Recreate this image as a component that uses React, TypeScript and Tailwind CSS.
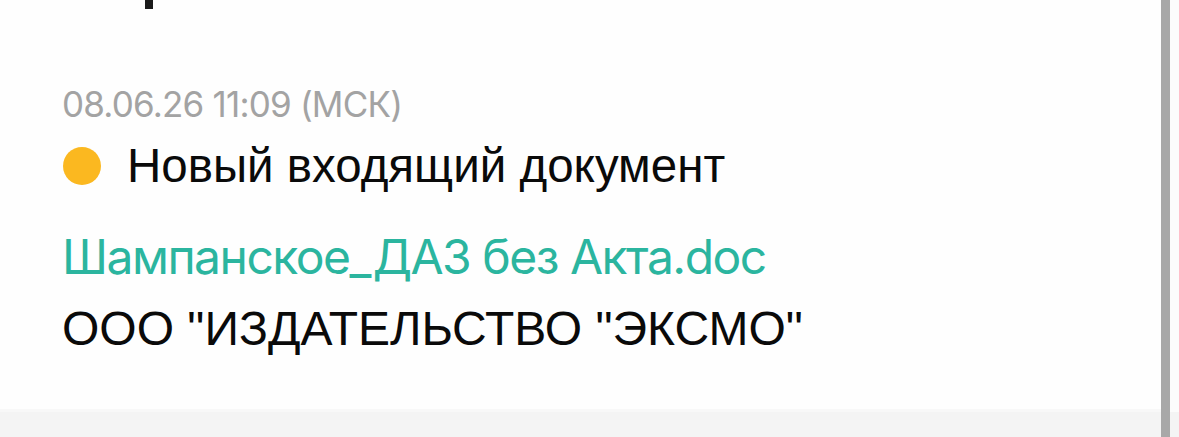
export default function App() {
  return (
    <div className="w-[1179px] h-[437px] bg-[#fefefe] flex overflow-hidden">
      <div className="flex-1 flex flex-col">
        <div className="flex-1 flex flex-col relative">
          <div className="absolute left-[145px] top-0 w-[8px] h-[9px] bg-[#1a1a1a]" />
          <div className="pl-[62px] pt-[84px] flex flex-col">
            <div className="text-[35px] leading-[40px] text-[#a3a3a3] tracking-[-0.8px]" style={{ fontFamily: "Inter, sans-serif" }}>
              08.06.26 11:09 (МСК)
            </div>
            <div className="flex items-center mt-[14px]">
              <div className="ml-[1px] w-[38px] h-[38px] rounded-full bg-[#fbb820]" />
              <div className="ml-[26px] text-[47.5px] leading-[56px] text-[#0a0a0a]" style={{ fontFamily: "'Liberation Sans', Arial, sans-serif" }}>
                Новый входящий документ
              </div>
            </div>
            <div className="mt-[35px] text-[48px] leading-[56px] text-[#2bb59f] tracking-[-1.5px]" style={{ fontFamily: "Inter, sans-serif" }}>
              Шампанское_ДАЗ без Акта.doc
            </div>
            <div className="mt-[16px] text-[48px] leading-[56px] text-[#0a0a0a]" style={{ fontFamily: "'Liberation Sans', Arial, sans-serif" }}>
              ООО "ИЗДАТЕЛЬСТВО "ЭКСМО"
            </div>
          </div>
        </div>
        <div className="h-[3px] bg-[#f8f8f8]" />
        <div className="h-[25px] bg-[#f4f4f4]" />
      </div>
      <div className="w-[9px] bg-[#a8a8a8]" />
      <div className="w-[9px] flex flex-col">
        <div className="flex-1 bg-[#fcfcfc]" />
        <div className="h-[25px] bg-[#f4f4f4]" />
      </div>
    </div>
  );
}
